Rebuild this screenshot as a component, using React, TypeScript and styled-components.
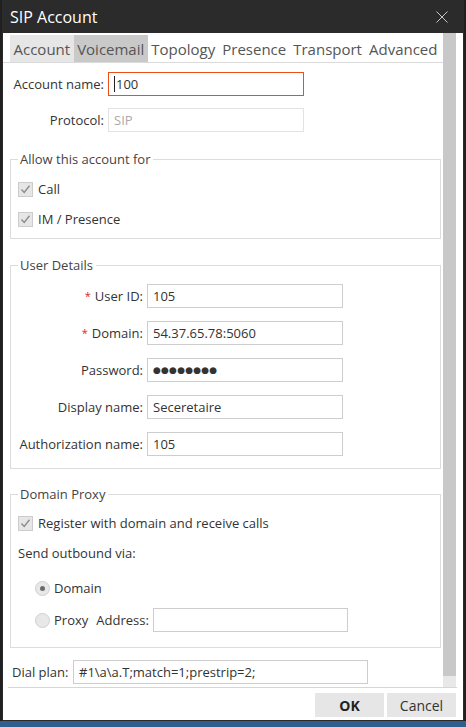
import React from 'react';
import styled, { createGlobalStyle } from 'styled-components';

const Global = createGlobalStyle`
  html, body { margin: 0; padding: 0; }
  body {
    background: linear-gradient(to bottom, #202020 0, #202020 721px, #2f5f8e 721px);
    font-family: "Open Sans", "Noto Sans", sans-serif;
    color: #333;
  }
  #root { min-height: 727px; }
`;

const Window = styled.div`
  box-sizing: border-box;
  margin-left: 2px;
  width: 462px;
  height: 721px;
  background: #fff;
  border: 1px solid #2b2b2b;
  border-top: 0;
  display: flex;
  flex-direction: column;
`;

const TitleBar = styled.div`
  height: 33px;
  flex: none;
  background: #2b2b2b;
  display: flex;
  align-items: center;
  justify-content: space-between;
  padding: 0 16px 0 8px;
  margin: 0 -1px;
`;

const Title = styled.div`
  color: #fff;
  font-size: 16px;
`;

const CloseButton = styled.div`
  width: 12px;
  height: 12px;
  display: flex;
`;

const Body = styled.div`
  height: 654px;
  flex: none;
  display: flex;
`;

const Pane = styled.div`
  width: 440px;
  flex: none;
  overflow: hidden;
  display: flex;
  flex-direction: column;
`;

const Scrollbar = styled.div`
  width: 13px;
  flex: none;
  background: #e8e8e8;
  display: flex;
  flex-direction: column;
`;

const Thumb = styled.div`
  height: 643px;
  background: #c8c8c8;
`;

const TabStrip = styled.div`
  display: flex;
  padding: 2px 0 0 7px;
  border-bottom: 1px solid #dadada;
`;

const Tab = styled.div<{ $tone?: 'hover' | 'active' }>`
  height: 27px;
  display: flex;
  align-items: center;
  padding: 0 3.5px;
  font-size: 15px;
  color: #555;
  white-space: nowrap;
  background: ${p => (p.$tone === 'active' ? '#c9c9c9' : p.$tone === 'hover' ? '#e6e6e6' : 'transparent')};
`;

const Form = styled.div`
  display: flex;
  flex-direction: column;
  padding: 0 2px 0 7px;
  font-size: 13px;
`;

const TopGrid = styled.div`
  display: grid;
  grid-template-columns: 92px 196px;
  grid-auto-rows: 24px;
  column-gap: 4px;
  row-gap: 12px;
  padding-left: 2px;
  margin-top: 9px;
`;

const Label = styled.div`
  display: flex;
  align-items: center;
  justify-content: flex-end;
  white-space: nowrap;
  color: #333;
`;

const Asterisk = styled.span`
  color: #e02424;
  font-size: 11px;
  margin-right: 4px;
  position: relative;
  top: -1px;
`;

const Input = styled.div<{ $state?: 'focus' | 'disabled' }>`
  box-sizing: border-box;
  height: 24px;
  display: flex;
  align-items: center;
  padding-left: 5px;
  border: 1px solid ${p => (p.$state === 'focus' ? '#ea4f1c' : p.$state === 'disabled' ? '#e3e3e3' : '#cdcdcd')};
  color: ${p => (p.$state === 'disabled' ? '#aaa' : '#333')};
  background: #fff;
  white-space: nowrap;
  font-size: 13px;
`;

const Caret = styled.span`
  display: inline-block;
  width: 1px;
  height: 16px;
  background: #222;
  margin-right: 1px;
`;

const Dots = styled.span`
  font-family: "DejaVu Sans", sans-serif;
  font-size: 9px;
  letter-spacing: 0.2px;
  color: #333;
`;

const Group = styled.fieldset<{ $gap: number; $pt: number; $pb: number }>`
  margin: ${p => p.$gap}px 0 0 0;
  padding: ${p => p.$pt}px 7px ${p => p.$pb}px 7px;
  border: 1px solid #dcdcdc;
  min-width: 0;
`;

const Legend = styled.legend`
  padding: 0 3px 0 2px;
  line-height: 18px;
  font-size: 13px;
  color: #444;
`;

const CheckRow = styled.div`
  height: 30px;
  display: flex;
  align-items: center;
  gap: 5px;
`;

const PlainRow = styled.div`
  height: 30px;
  display: flex;
  align-items: center;
`;

const DetailsGrid = styled.div`
  display: grid;
  grid-template-columns: 125px 196px;
  grid-auto-rows: 24px;
  column-gap: 4px;
  row-gap: 13px;
`;

const RadioList = styled.div`
  display: flex;
  flex-direction: column;
  margin-top: 4px;
  padding-left: 17px;
`;

const RadioRow = styled.div`
  height: 32px;
  display: flex;
  align-items: center;
`;

const RadioCircle = styled.span<{ $on?: boolean }>`
  box-sizing: border-box;
  width: 15px;
  height: 15px;
  border-radius: 50%;
  border: 1px solid #cfcfcf;
  background: #e8e8e8;
  display: flex;
  align-items: center;
  justify-content: center;
  margin-right: 4px;
  &::after {
    content: '';
    width: 5px;
    height: 5px;
    border-radius: 50%;
    background: ${p => (p.$on ? '#6b6b6b' : 'transparent')};
  }
`;

const AddressLabel = styled.span`
  margin-left: 8px;
  margin-right: 4px;
`;

const DialRow = styled.div`
  display: flex;
  align-items: center;
  gap: 4px;
  margin-top: 12px;
  padding-left: 2px;
  height: 24px;
`;

const DialLabel = styled.div`
  width: 57px;
  white-space: nowrap;
`;

const Footer = styled.div`
  margin: 0 6px 0 5px;
  border-top: 1px solid #d6d6d6;
  display: flex;
  justify-content: flex-end;
  gap: 3px;
  padding: 5px 1px 0 0;
`;

const Button = styled.div<{ $primary?: boolean }>`
  width: 69px;
  height: 24px;
  background: #e6e6e6;
  display: flex;
  align-items: center;
  justify-content: center;
  font-size: 14px;
  font-weight: ${p => (p.$primary ? 700 : 400)};
  color: ${p => (p.$primary ? '#222' : '#333')};
`;

const Check = () => (
  <svg width="15" height="15" viewBox="0 0 15 15">
    <rect x="0.5" y="0.5" width="14" height="14" fill="#e6e6e6" stroke="#cccccc" />
    <path d="M3.5 7.5 L6.2 10.5 L11.5 3.8" fill="none" stroke="#8c8c8c" strokeWidth="1.4" />
  </svg>
);

const tabs: { name: string; tone?: 'hover' | 'active' }[] = [
  { name: 'Account', tone: 'hover' },
  { name: 'Voicemail', tone: 'active' },
  { name: 'Topology' },
  { name: 'Presence' },
  { name: 'Transport' },
  { name: 'Advanced' },
];

export default function App() {
  return (
    <>
      <Global />
      <Window>
        <TitleBar>
          <Title>SIP Account</Title>
          <CloseButton>
            <svg width="12" height="12" viewBox="0 0 12 12">
              <path d="M0.5 0.5 L11.5 11.5 M11.5 0.5 L0.5 11.5" stroke="#c8c8c8" strokeWidth="1" />
            </svg>
          </CloseButton>
        </TitleBar>
        <Body>
          <Pane>
            <TabStrip>
              {tabs.map(t => (
                <Tab key={t.name} $tone={t.tone}>{t.name}</Tab>
              ))}
            </TabStrip>
            <Form>
              <TopGrid>
                <Label>Account name:</Label>
                <Input $state="focus"><Caret />100</Input>
                <Label>Protocol:</Label>
                <Input $state="disabled">SIP</Input>
              </TopGrid>

              <Group $gap={18} $pt={6} $pb={4}>
                <Legend>Allow this account for</Legend>
                <CheckRow><Check />Call</CheckRow>
                <CheckRow><Check />IM / Presence</CheckRow>
              </Group>

              <Group $gap={17} $pt={10} $pb={12}>
                <Legend>User Details</Legend>
                <DetailsGrid>
                  <Label><Asterisk>*</Asterisk>User ID:</Label>
                  <Input>105</Input>
                  <Label><Asterisk>*</Asterisk>Domain:</Label>
                  <Input>54.37.65.78:5060</Input>
                  <Label>Password:</Label>
                  <Input><Dots>●●●●●●●●</Dots></Input>
                  <Label>Display name:</Label>
                  <Input>Seceretaire</Input>
                  <Label>Authorization name:</Label>
                  <Input>105</Input>
                </DetailsGrid>
              </Group>

              <Group $gap={16} $pt={5} $pb={11}>
                <Legend>Domain Proxy</Legend>
                <CheckRow><Check />Register with domain and receive calls</CheckRow>
                <PlainRow>Send outbound via:</PlainRow>
                <RadioList>
                  <RadioRow><RadioCircle $on />Domain</RadioRow>
                  <RadioRow>
                    <RadioCircle />Proxy<AddressLabel>Address:</AddressLabel>
                    <Input style={{ width: 195 }} />
                  </RadioRow>
                </RadioList>
              </Group>

              <DialRow>
                <DialLabel>Dial plan:</DialLabel>
                <Input style={{ width: 295 }}>#1\a\a.T;match=1;prestrip=2;</Input>
              </DialRow>
            </Form>
          </Pane>
          <Scrollbar><Thumb /></Scrollbar>
        </Body>
        <Footer>
          <Button $primary>OK</Button>
          <Button>Cancel</Button>
        </Footer>
      </Window>
    </>
  );
}
